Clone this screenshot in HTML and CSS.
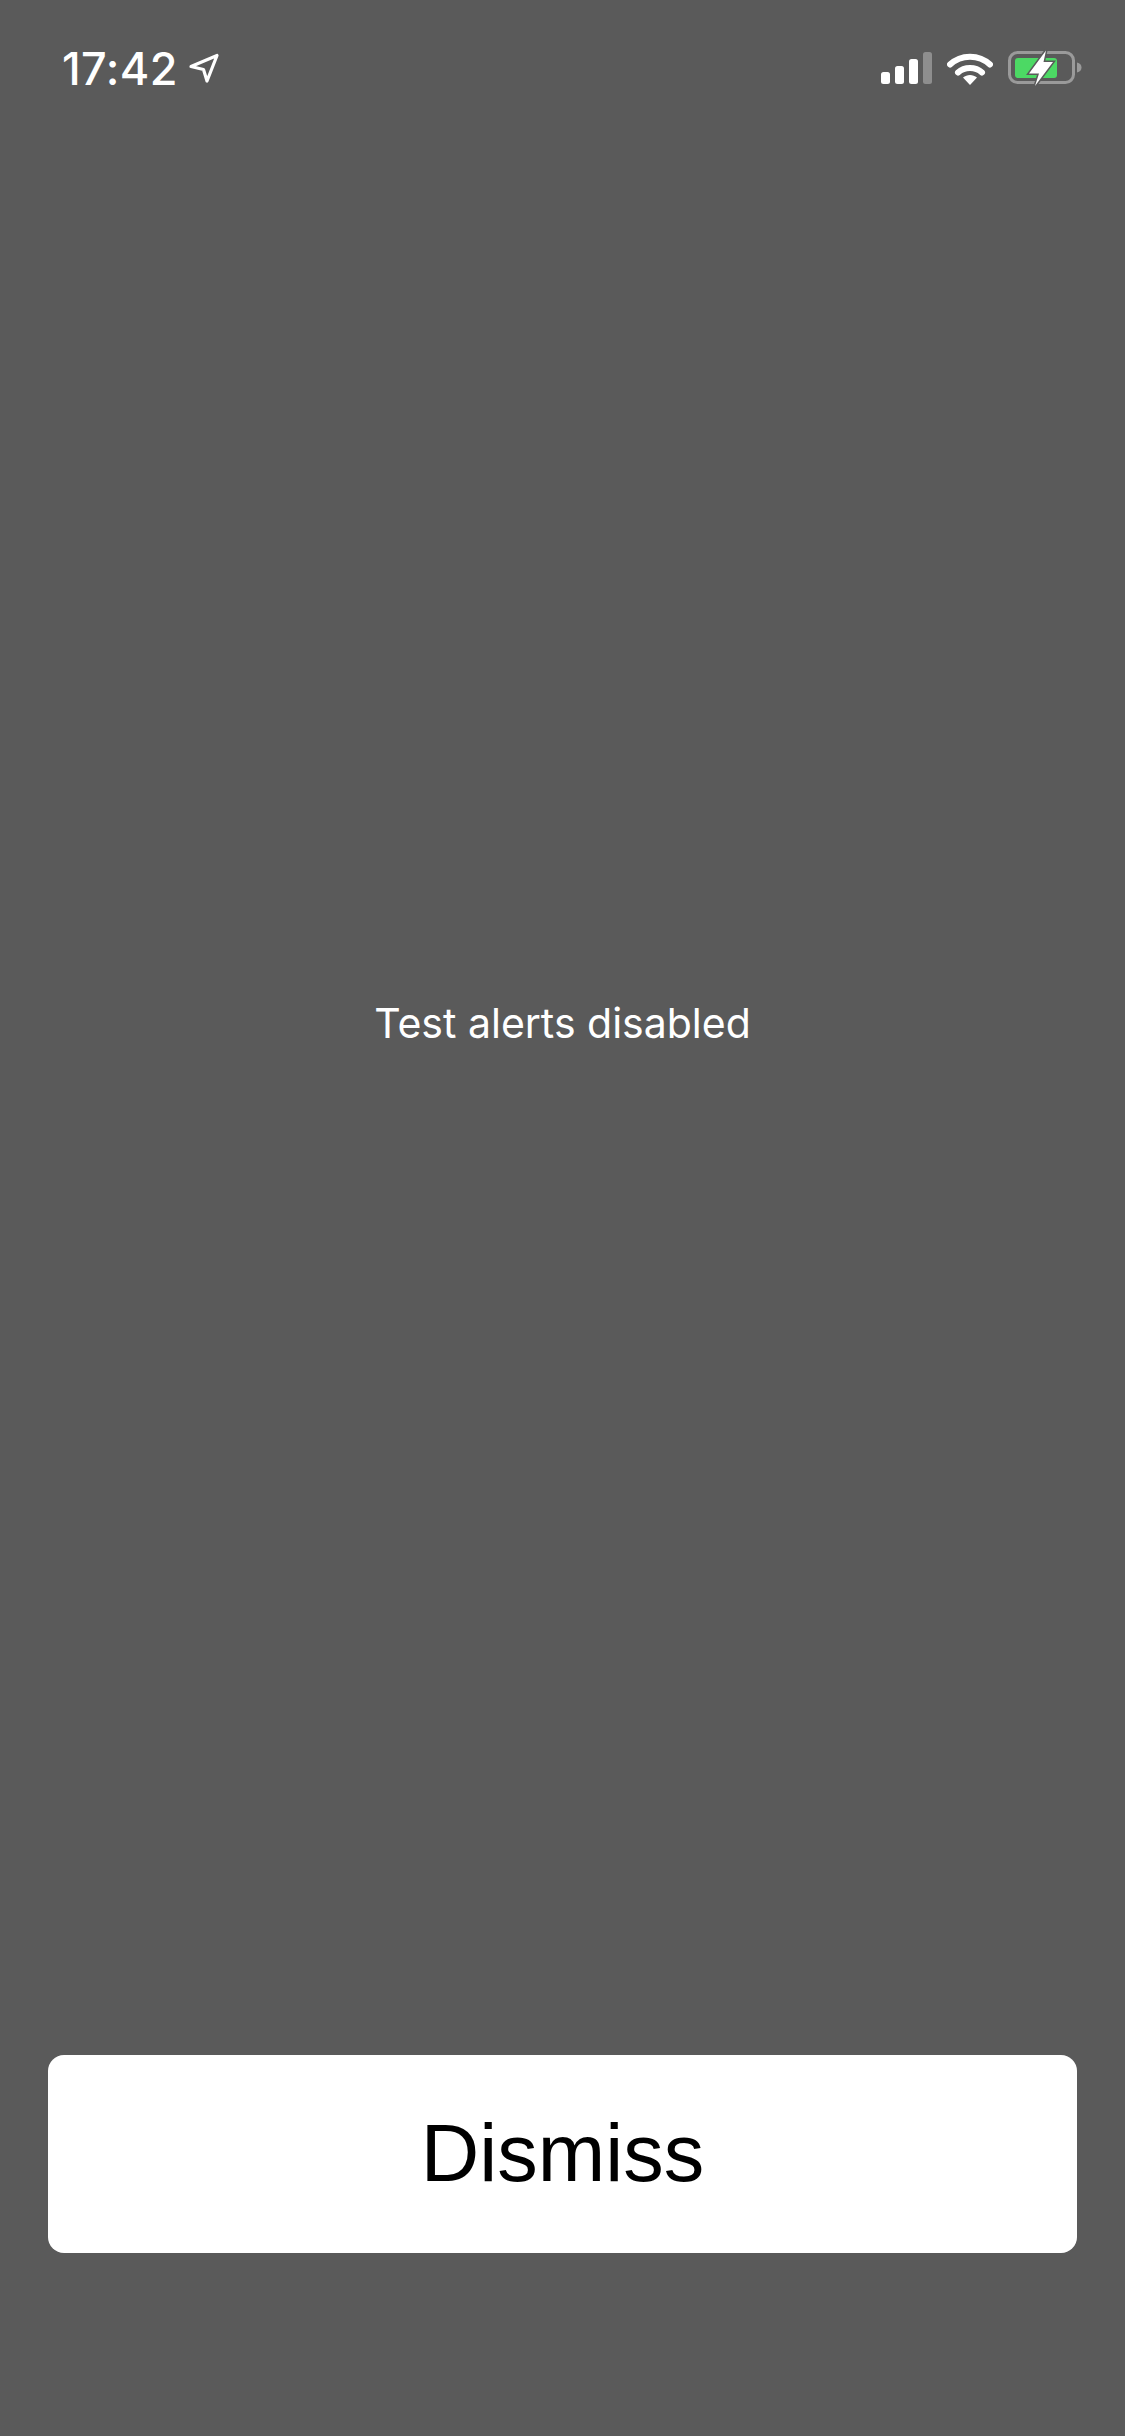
FILE: index.html
```html
<!DOCTYPE html>
<html lang="en">
<head>
<meta charset="utf-8">
<title>Test alerts disabled</title>
<link rel="stylesheet" href="styles.css">
</head>
<body>
<main class="screen">
  <header class="status-bar">
    <div class="status-left">
      <span class="time">17:42</span>
      <svg class="location" viewBox="0 0 32 32" aria-hidden="true">
        <path d="M4 14.500 30 3.500 20 29 16.500 17.500Z" fill="none" stroke="#fff" stroke-width="3.200" stroke-linejoin="round"/>
      </svg>
    </div>
    <div class="status-right">
      <svg class="signal" viewBox="0 0 51 32" aria-hidden="true">
        <rect x="0" y="20" width="9" height="12" rx="2.500" fill="#fff"/>
        <rect x="14" y="14" width="9" height="18" rx="2.500" fill="#fff"/>
        <rect x="28" y="7" width="9" height="25" rx="2.500" fill="#fff"/>
        <rect x="42" y="0" width="9" height="32" rx="2.500" fill="#8e8e8e"/>
      </svg>
      <svg class="wifi" viewBox="0 0 46 33" aria-hidden="true">
        <path d="M3 12.500C14 2 32 2 43 12.500" fill="none" stroke="#fff" stroke-width="6" stroke-linecap="round"/>
        <path d="M11 20.500C17.500 14.500 28.500 14.500 35 20.500" fill="none" stroke="#fff" stroke-width="6" stroke-linecap="round"/>
        <path d="M16 25.500C20 22 26 22 30 25.500L23 33Z" fill="#fff"/>
      </svg>
      <svg class="battery" viewBox="0 0 74 38" aria-hidden="true">
        <rect x="1.500" y="3.500" width="64" height="30" rx="8" fill="none" stroke="#9a9a9a" stroke-width="3"/>
        <rect x="7" y="9" width="42" height="20" rx="3" fill="#4cd964"/>
        <path d="M69 13.500C72 14 73.500 16 73.500 18.500C73.500 21 72 23 69 23.500Z" fill="#9a9a9a"/>
        <path class="bolt" d="M38 1.500 21 24.500H31L27 37 45 13H35.500Z"/>
      </svg>
    </div>
  </header>
  <section class="message">
    <p class="message-text">Test alerts disabled</p>
  </section>
  <footer class="actions">
    <button class="dismiss" type="button">Dismiss</button>
  </footer>
</main>
</body>
</html>
```
FILE: styles.css
```css
* {
  box-sizing: border-box;
}

html,
body {
  margin: 0;
  padding: 0;
}

body {
  width: 1125px;
  height: 2436px;
  background: #5a5a5a;
  overflow: hidden;
}

.screen {
  display: flex;
  flex-direction: column;
  width: 1125px;
  height: 2436px;
}

.status-bar {
  display: flex;
  justify-content: space-between;
  align-items: center;
  height: 136px;
  padding: 0 43px 0 62px;
  color: #fff;
}

.status-left {
  display: flex;
  align-items: center;
  gap: 9px;
}

.time {
  font-family: Inter, "Liberation Sans", sans-serif;
  font-size: 45px;
  font-weight: 500;
  line-height: 1;
  letter-spacing: 0.4px;
}

.location {
  display: block;
  width: 32px;
  height: 32px;
}

.status-right {
  display: flex;
  align-items: center;
  gap: 15px;
}

.signal {
  display: block;
  width: 51px;
  height: 32px;
}

.wifi {
  display: block;
  width: 46px;
  height: 33px;
}

.battery {
  display: block;
  width: 74px;
  height: 38px;
  overflow: visible;
}

.bolt {
  fill: #fff;
  stroke: #5a5a5a;
  stroke-width: 3;
  paint-order: stroke;
}

.message {
  flex: 1;
  display: flex;
  align-items: center;
  justify-content: center;
  padding-bottom: 145px;
}

.message-text {
  margin: 0;
  font-family: Inter, "Liberation Sans", sans-serif;
  font-size: 41px;
  font-weight: 400;
  line-height: 50px;
  color: #fff;
}

.actions {
  padding: 0 48px 183px;
}

.dismiss {
  display: block;
  width: 100%;
  height: 198px;
  padding: 0 0 1px;
  border: 0;
  border-radius: 16px;
  background: #fff;
  color: #000;
  font-family: "Liberation Sans", Arial, sans-serif;
  font-size: 81px;
  font-weight: 400;
  line-height: 1;
}
```
